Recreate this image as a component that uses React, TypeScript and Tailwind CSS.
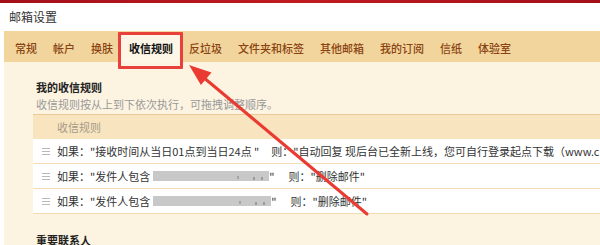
import React from "react";

const tabs = ["常规", "帐户", "换肤", "收信规则", "反垃圾", "文件夹和标签", "其他邮箱", "我的订阅", "信纸", "体验室"];
const ACTIVE = "收信规则";

function DragHandle() {
  return (
    <svg width="8" height="7" viewBox="0 0 8 7" className="shrink-0">
      <rect x="0" y="0" width="8" height="1" fill="#b8b8b8" />
      <rect x="0" y="3" width="8" height="1" fill="#b8b8b8" />
      <rect x="0" y="6" width="8" height="1" fill="#b8b8b8" />
    </svg>
  );
}

function Redacted({ w }: { w: number }) {
  return (
    <span className="relative inline-block h-[10px] bg-[#c8c8c8] align-middle ml-[3px]" style={{ width: w }}>
      <span className="absolute right-[6px] top-[6px] w-[2px] h-[3px] bg-[#9a9a9a]" />
      <span className="absolute right-[14px] top-[6px] w-[2px] h-[3px] bg-[#9a9a9a]" />
      <span className="absolute right-[30px] top-[5px] w-[2px] h-[3px] bg-[#a5a5a5]" />
    </span>
  );
}

function Row({ children }: { children: React.ReactNode }) {
  return (
    <div className="h-[25px] bg-white border-b border-[#f3dcb4] flex items-center pl-[9px] gap-[7px] whitespace-nowrap overflow-hidden text-[11px] text-[#333]">
      <DragHandle />
      <div className="flex items-center">{children}</div>
    </div>
  );
}

export default function App() {
  return (
    <div
      className="relative w-[600px] h-[245px] overflow-hidden bg-white"
      style={{ fontFamily: '"Noto Sans CJK SC", "Liberation Sans", sans-serif' }}
    >
      <div className="h-[3px] bg-gradient-to-r from-[#a3101a] via-[#c01a20] to-[#a3101a]" />
      <div className="h-[28px] flex items-center pl-[9px] text-[12px] text-[#333]">邮箱设置</div>

      <div className="ml-[4px] bg-[#fdf3e1] h-[214px]">
        {/* tab bar */}
        <div className="h-[31px] bg-[#f1d59d] flex items-end pl-[3px]">
          {tabs.map((t) => (
            <div
              key={t}
              className={
                t === ACTIVE
                  ? "h-[27px] px-2 flex items-center pb-[1px] text-[11px] font-bold text-[#111] bg-[#fdf6e7]"
                  : "h-[27px] px-2 flex items-center pb-[1px] text-[11px] font-medium text-[#8a4310]"
              }
            >
              {t}
            </div>
          ))}
        </div>

        {/* content */}
        <div className="pl-[29px] pt-[17px]">
          <div className="pl-[3px] text-[11px] font-bold text-[#222] leading-[16px]">我的收信规则</div>
          <div className="pl-[3px] text-[11px] text-[#999] leading-[16px] mt-[1px]">
            收信规则按从上到下依次执行，可拖拽调整顺序。
          </div>

          <div className="mt-[2px]">
            <div className="h-[25px] border-t border-[#ebc994] bg-[#f8e5bf] flex items-center pl-[24px] text-[11px] text-[#a59a8a]">
              收信规则
            </div>
            <Row>
              <span>如果："接收时间从当日01点到当日24点 "</span>
              <span className="ml-[12px]">则："自动回复 现后台已全新上线，您可自行登录起点下载（www.cncmax.cn）"</span>
            </Row>
            <Row>
              <span>如果："发件人包含</span>
              <Redacted w={116} />
              <span>"</span>
              <span className="ml-[14px]">则："删除邮件"</span>
            </Row>
            <Row>
              <span>如果："发件人包含</span>
              <Redacted w={118} />
              <span>"</span>
              <span className="ml-[14px]">则："删除邮件"</span>
            </Row>
          </div>

          <div className="pl-[3px] mt-[18px] text-[11px] font-bold text-[#222] leading-[16px]">重要联系人</div>
        </div>
      </div>

      {/* red highlight box and arrow */}
      <div className="absolute left-[118px] top-[32px] w-[65px] h-[37px] border-[3px] border-[#e8403a] rounded-[1px]" />
      <svg className="absolute left-0 top-0 pointer-events-none" width="600" height="245" viewBox="0 0 600 245">
        <line x1="367" y1="214" x2="203" y2="77" stroke="#ea3b32" strokeWidth="3" strokeLinecap="round" />
        <polygon points="189,65 200.9,85 211.5,72.5" fill="#ea3b32" />
      </svg>
    </div>
  );
}
